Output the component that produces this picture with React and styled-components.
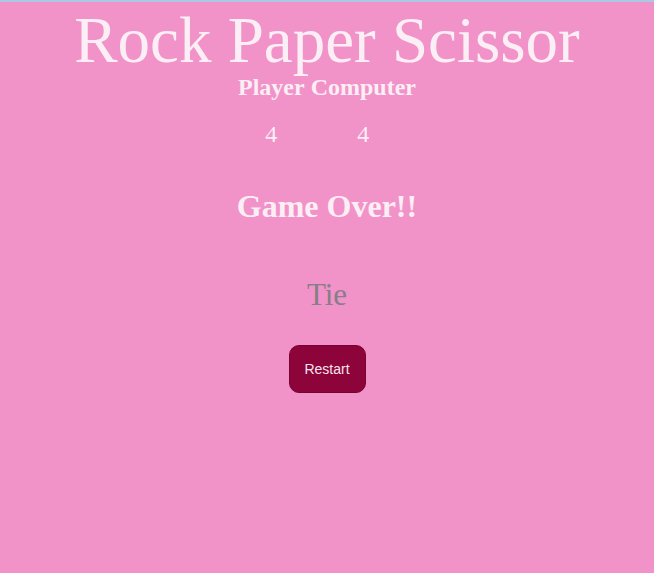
import React, { useState } from "react";
import styled, { createGlobalStyle } from "styled-components";

const GlobalStyle = createGlobalStyle`
  html, body {
    margin: 0;
    padding: 0;
    background: #f193c9;
  }
  body {
    font-family: "Liberation Serif", "Times New Roman", serif;
  }
`;

const Page = styled.div`
  min-height: 573px;
  box-sizing: border-box;
  border-top: 2px solid #a9c8e4;
  padding-top: 6px;
  background: #f193c9;
  color: #fbeef4;
  display: flex;
  flex-direction: column;
  align-items: center;
`;

const Title = styled.h1`
  margin: 0;
  font-size: 65px;
  font-weight: 400;
  line-height: 64px;
`;

const Board = styled.div`
  margin-top: 3px;
  display: flex;
  gap: 6px;
`;

const Side = styled.div`
  display: flex;
  flex-direction: column;
  align-items: center;
`;

const Label = styled.h2`
  margin: 0;
  font-size: 24px;
  font-weight: 700;
  line-height: 24px;
`;

const Score = styled.span`
  margin-top: 23px;
  font-size: 24px;
  line-height: 24px;
`;

const Status = styled.h1`
  margin: 44px 0 0;
  font-size: 32px;
  font-weight: 700;
  line-height: 32px;
`;

const Result = styled.p`
  margin: 58px 0 0;
  font-size: 31px;
  line-height: 30px;
  color: #877e86;
`;

const RestartButton = styled.button`
  margin-top: 35px;
  width: 77px;
  height: 48px;
  box-sizing: border-box;
  border: 1px solid #7a0231;
  border-radius: 10px;
  background: #8c0439;
  color: #f8e4ec;
  font-family: "Liberation Sans", Arial, sans-serif;
  font-size: 14px;
  cursor: pointer;
`;

export default function App() {
  const [scores, setScores] = useState({ player: 4, computer: 4 });

  const restart = () => setScores({ player: 0, computer: 0 });

  return (
    <>
      <GlobalStyle />
      <Page>
        <Title>Rock Paper Scissor</Title>
        <Board>
          <Side>
            <Label>Player</Label>
            <Score>{scores.player}</Score>
          </Side>
          <Side>
            <Label>Computer</Label>
            <Score>{scores.computer}</Score>
          </Side>
        </Board>
        <Status>Game Over!!</Status>
        <Result>Tie</Result>
        <RestartButton onClick={restart}>Restart</RestartButton>
      </Page>
    </>
  );
}
